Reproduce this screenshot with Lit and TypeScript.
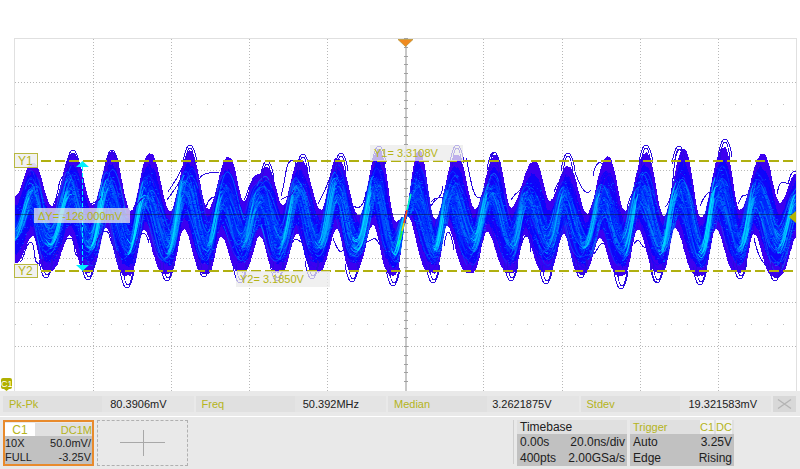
import { LitElement, html, svg, css } from "lit";
import { customElement } from "lit/decorators.js";

type Pt = [number, number];

// Upper and lower edge of the persistence band.
const UPPER: Pt[] = [
  [15, 195], [33, 162], [52, 205], [73, 152], [93, 204], [112, 151], [131, 210], [150, 152], [170, 210],
  [190, 150], [208, 208], [229, 156], [244, 200], [256, 174], [267, 166], [283, 204], [300, 158], [321, 209],
  [337, 157], [359, 215], [379, 149], [396, 221], [404, 216], [419, 149], [435, 218], [457, 153], [475, 208],
  [496, 154], [511, 206], [535, 160], [550, 200], [568, 165], [587, 212], [608, 156], [625, 210], [646, 152],
  [664, 215], [684, 148], [701, 217], [724, 146], [740, 209], [763, 153], [780, 202], [797, 172],
];
// Odd entries are crests, even entries are troughs.
const LOWER: Pt[] = [
  [12, 264], [33, 237], [47, 273], [70, 237], [88, 274], [106, 229], [127, 277], [144, 231], [167, 275],
  [184, 230], [206, 275], [221, 237], [241, 273], [260, 237], [278, 274], [297, 235], [316, 273], [337, 230],
  [353, 272], [373, 226], [393, 277], [407, 217], [433, 274], [447, 227], [470, 274], [487, 233], [511, 274],
  [525, 236], [546, 273], [564, 235], [581, 275], [600, 239], [621, 277], [638, 230], [660, 274], [675, 229],
  [700, 277], [716, 230], [739, 274], [754, 235], [776, 278], [797, 238],
];
const PHASE: Pt[] = LOWER.map(([x], i) => [x - 1, i % 2 ? 0 : 1]);

const at = (pts: Pt[], x: number): number => {
  if (x <= pts[0][0]) return pts[0][1];
  for (let i = 1; i < pts.length; i++) {
    if (x <= pts[i][0]) {
      const [x0, y0] = pts[i - 1];
      const [x1, y1] = pts[i];
      const f = (1 - Math.cos((Math.PI * (x - x0)) / (x1 - x0))) / 2;
      if (pts === PHASE) return y0 + (y1 - y0) * f;
      // The band stays full at its outer extremes and narrows to sharp notches.
      const outer = pts === LOWER ? Math.max(y0, y1) : Math.min(y0, y1);
      const inner = pts === LOWER ? Math.min(y0, y1) : Math.max(y0, y1);
      const g = outer === y0 ? f : 1 - f;
      return outer + (inner - outer) * g ** (pts === LOWER ? 1.8 : 1.2);
    }
  }
  return pts[pts.length - 1][1];
};

let seed = 77;
const rnd = () => {
  seed = (seed * 1664525 + 1013904223) % 4294967296;
  return seed / 4294967296;
};

const band = (inset: number, rough: number) => {
  const top: string[] = [];
  const low: string[] = [];
  for (let x = 15; x <= 796; x++) {
    const u = at(UPPER, x);
    const l = at(LOWER, x);
    const d = (l - u) * inset;
    top.push(`${x},${(u + d + rnd() * rough).toFixed(1)}`);
    low.unshift(`${x},${(l - d - rnd() * rough).toFixed(1)}`);
  }
  return `M${top.join("L")}L${low.join("L")}Z`;
};
const OUTER = band(0, 2);

const strand = (from: number, to: number, mid: number, swing: number, shift: number) => {
  const pts: string[] = [];
  const w = rnd() * 6;
  for (let x = Math.round(from); x <= to; x += 2) {
    const s = x + shift;
    const t = mid + (at(PHASE, s) - 0.5) * swing + 0.05 * Math.sin(x / 15 + w);
    const u = at(UPPER, s);
    const l = at(LOWER, s);
    pts.push(`${x},${(u + (l - u) * t).toFixed(1)}`);
  }
  return `M${pts.join("L")}`;
};

const OUT_TONES = ["#3c00f0", "#2408f8", "#0010ff"];
const IN_TONES = ["#0048ff", "#0068ff", "#0080f8", "#0098f8", "#0020ff", "#0000ff"];
const strands = Array.from({ length: 900 }, () => {
  const from = 15 + Math.floor(rnd() * 775);
  const spread = (rnd() + rnd() - 1) * 0.4;
  const inner = Math.abs(spread) < 0.27;
  const tones = inner ? IN_TONES : OUT_TONES;
  return {
    d: strand(from, Math.min(796, from + 8 + rnd() * 34), 0.52 + spread, rnd() * 0.3, (rnd() - 0.5) * 9),
    c: tones[Math.floor(rnd() * tones.length)],
    o: (0.3 + rnd() * 0.45).toFixed(2),
  };
});

// Rising edges, where most sweeps coincide.
const edges: { d: string; c: string; o: string }[] = [];
for (let i = 0; i < LOWER.length - 1; i += 2) {
  const a = LOWER[i][0];
  const b = LOWER[i + 1][0];
  const strong = 0.4 + 0.6 * Math.abs(Math.cos(((a - 400) * Math.PI) / 300));
  for (let k = 0; k < 12; k++) {
    edges.push({
      d: strand(Math.max(15, a - 2 + rnd() * 7), Math.min(796, b + 3 - rnd() * 7), 0.42 + rnd() * 0.16, 0.1 + rnd() * 0.3, (rnd() - 0.5) * 4),
      c: k % 2 ? "#00f0ff" : "#00b4ff",
      o: (strong * (0.4 + rnd() * 0.45)).toFixed(2),
    });
  }
}

// Dots of single samples give the band its grain.
const grain = (n: number) =>
  Array.from({ length: n }, () => {
    const x = 16 + Math.floor(rnd() * 778);
    const u = at(UPPER, x);
    const l = at(LOWER, x);
    return `M${x},${Math.round(u + (l - u) * (0.2 + rnd() * 0.65)) + 0.5}h${rnd() > 0.6 ? 2 : 1}`;
  }).join("");

const arc = (x: number, y: number, h: number, w = 7) =>
  `M${x - w},${y + h}C${x - w / 2},${y - h / 3} ${x + w / 2},${y - h / 3} ${x + w},${y + h}`;

const STRAYS = [
  ...([[46, 278], [88, 280], [127, 288], [167, 281], [204, 277], [240, 283], [277, 281], [312, 279], [352, 282],
    [393, 286], [433, 283], [511, 281], [546, 284], [581, 278], [621, 289], [657, 283], [700, 285], [740, 279],
    [775, 281]] as Pt[]).flatMap(([x, y]) => [arc(x, y, -18), arc(x + 1, y - 3, -16, 5)]),
  ...([[190, 145], [267, 161], [303, 154], [341, 153], [379, 146], [457, 145], [494, 152], [568, 153], [646, 145],
    [679, 146], [725, 139], [112, 150], [73, 150]] as Pt[]).flatMap(([x, y]) => [arc(x, y, 18), arc(x, y + 3, 18, 5)]),
  "M20,262C24,262 25,242 31,242C36,242 32,263 39,264",
  "M53,205C60,194 57,178 64,176M52,258C60,250 63,238 70,238C77,238 72,256 78,256",
  "M90,205C95,200 98,204 101,196",
  "M96,244C101,228 109,228 110,238C112,246 117,254 121,260",
  "M136,244C141,230 146,230 149,243M133,208C140,204 138,200 143,198",
  "M168,192C174,182 178,178 182,168M167,200C174,190 178,186 181,178",
  "M198,182C200,172 213,172 219,173M206,207C212,190 214,204 217,190",
  "M244,200C250,190 248,180 258,178",
  "M281,196C286,180 285,160 293,160C296,160 296,164 297,168",
  "M281,200C287,194 290,200 294,190M318,204C325,190 328,186 332,170",
  "M293,242C296,234 302,246 306,244M333,238C338,252 341,256 345,246",
  "M354,206C359,210 364,206 366,192",
  "M365,242C370,244 374,232 379,244M378,236C382,252 385,252 388,248",
  "M431,206C436,196 441,201 443,186M466,158C470,172 472,198 479,198C483,198 484,190 488,180",
  "M444,246C447,224 451,230 454,250M431,202C436,196 438,199 443,197",
  "M486,186C491,178 489,154 494,153M511,200C517,190 518,194 526,184",
  "M521,246C525,230 530,234 531,252M554,192C558,180 560,184 563,172",
  "M575,172C582,192 587,196 591,190M593,176C596,160 600,162 603,164",
  "M594,254C599,248 600,240 606,244M627,208C631,190 633,198 636,184",
  "M634,244C641,234 638,246 646,248M648,250C652,266 652,282 657,282",
  "M665,207C673,200 672,182 675,160C677,148 681,148 684,150",
  "M700,206C704,196 709,190 712,193M738,204C744,190 744,198 747,194",
  "M754,238C758,258 765,266 770,268M751,188C753,172 757,176 759,162",
  "M777,194C780,178 784,182 788,184C792,170 792,172 796,171",
];

const X_DIV = [93, 171, 249, 327, 483, 562, 640, 718];
const Y_DIV = [82, 126, 170, 258, 302, 346];

const MEASURES = [
  ["Pk-Pk", "80.3906mV"],
  ["Freq", "50.392MHz"],
  ["Median", "3.2621875V"],
  ["Stdev", "19.321583mV"],
];

@customElement("scope-plot")
class ScopePlot extends LitElement {
  static styles = css`
    :host { display: block; background: #fff; }
    svg { display: block; width: 100%; height: auto; }
    text { font: 12px "Liberation Sans", Arial, sans-serif; fill: #b4b414; }
    .readout { font-size: 11px; }
    .badge { font-size: 9px; fill: #fff; }
    .crisp { shape-rendering: crispEdges; fill: none; }
    .frame { stroke: #e0e0e0; }
    .dots { stroke: #b8b8b8; stroke-dasharray: 1 2; }
    .sparse { stroke: #c0c0c0; stroke-dasharray: 1 15; }
    .axis { stroke: #c8c8c8; stroke-width: 2; }
    .ticks { stroke: #a0a0a0; }
    .center { stroke: #101830; stroke-opacity: 0.5; }
    .cursor { stroke: #b0b010; stroke-width: 2; stroke-dasharray: 10 4; }
    .plate { fill: #ebebeb; fill-opacity: 0.75; }
    .tag { shape-rendering: crispEdges; fill: #f0f0f0; fill-opacity: 0.9; stroke: #b8b840; }
    .stray { stroke: #2a0ae0; }
    .cyan { fill: #00f0ff; }
    .span { stroke: #00f0ff; stroke-dasharray: 4 2; }
  `;
  render() {
    return html`<svg viewBox="0 0 800 391" role="img" aria-label="Persistence waveform, channel 1">
      <clipPath id="band"><path d=${OUTER} /></clipPath>
      <g class="crisp">
        <path class="frame" d="M14.5,391V38.5H796.5V391" />
        ${X_DIV.map((x) => svg`<path class="dots" d="M${x + 0.5},39V391" />`)}
        ${Y_DIV.map((y) => svg`<path class="dots" d="M15,${y + 0.5}H796" />`)}
        <path class="sparse" d="M15,104.5H796M15,324.5H796" />
        <path class="axis" d="M406,46V391" />
        ${Array.from({ length: 40 }, (_, i) => Math.round(38 + i * 8.8)).map(
          (y) => svg`<path class="ticks" d="M404,${y + 0.5}H408" />`)}
      </g>
      <g class="crisp">
        <path fill="#3c00f0" d=${OUTER} />
        <path fill="#1004fa" d=${band(0.12, 5)} />
        <path fill="#0028fc" d=${band(0.28, 9)} />
      </g>
      <g fill="none" clip-path="url(#band)">
        ${strands.map((s) => svg`<path d=${s.d} stroke=${s.c} stroke-opacity=${s.o} />`)}
        <path stroke="#0090ff" stroke-opacity="0.4" d=${grain(2600)} />
        <path stroke="#0000ff" stroke-opacity="0.5" d=${grain(4200)} />
        ${edges.map((s) => svg`<path d=${s.d} stroke=${s.c} stroke-opacity=${s.o} />`)}
      </g>
      <g class="crisp">
        ${STRAYS.map((d) => svg`<path class="stray" d=${d} />`)}
        <path class="center" d="M15,214.5H796" />
        <path class="cursor" d="M41,161H796M41,271H796" />
        <path class="span" d="M82.5,167V265" />
      </g>
      <g fill="none" stroke-width="1.600">
        <path stroke="#00f8c0" d="M407,210L411,194M397,246L400,240" />
        <path stroke="#20f040" d="M400,240L402,231" />
        <path stroke="#e8e000" d="M402,231L404,223" />
        <path stroke="#ff4010" d="M404,223L407,210" />
      </g>
      <path class="cyan" d="M82.5,161L89,167H76ZM82.5,271L89,265H76Z" />
      <rect class="tag" x="14.5" y="153.5" width="23" height="14" />
      <rect class="tag" x="14.5" y="264.5" width="23" height="13" />
      <rect class="plate" x="34" y="208" width="96" height="15" />
      <rect class="plate" x="370" y="145" width="93" height="16" />
      <rect class="plate" x="236" y="271" width="94" height="16" />
      <text x="18" y="165">Y1</text>
      <text x="18" y="275">Y2</text>
      <text class="readout" x="38" y="220">ΔY= -126.000mV</text>
      <text class="readout" x="374" y="157">Y1= 3.3108V</text>
      <text class="readout" x="240" y="283">Y2= 3.1850V</text>
      <path fill="#f08a20" stroke="#b09030" stroke-width="0.7" d="M398,39.500H413L405.500,46.500Z" />
      <path fill="#b4b400" d="M796,211V223L789,217Z" />
      <path fill="#b0b000" d="M3,378H10Q12,378 12,380V387Q12,389 10,389H9L6.500,391L4,389H3Q1,389 1,387V380Q1,378 3,378Z" />
      <text class="badge" x="1" y="387">C1</text>
    </svg>`;
  }
}

@customElement("app-root")
class AppRoot extends LitElement {
  static styles = css`
    :host { display: block; min-height: 100vh; background: #e9e9e9; color: #202020; font: 12px/15px "Liberation Sans", Arial, sans-serif; }
    * { box-sizing: border-box; }
    button { font: inherit; color: inherit; padding: 0; margin: 0; border: 0; background: none; }
    .measures { display: flex; gap: 2px; padding: 5px 4px 4px 3px; border-bottom: 1px solid #fff; font-size: 11px; }
    .list { flex: 1; display: grid; grid-template-columns: repeat(4, 1fr); gap: 2px; margin: 0; }
    .item { display: flex; justify-content: space-between; padding: 0 27px 0 6px; background: linear-gradient(90deg, #e0e0e0 52%, #e4e4e4 52%); line-height: 16px; }
    .item dt { color: #b4b420; }
    .item dd { margin: 0; }
    .item:nth-child(4) { padding-right: 14px; }
    .close { width: 23px; height: 16px; background: #d8d8d8; display: grid; place-items: center; }
    .dock { display: flex; padding: 3px; }
    .card { display: block; text-align: left; }
    .row { display: flex; justify-content: space-between; }
    .body { background: #c1c1c1; padding: 0 2px 0 3px; }
    .body .row { line-height: 16px; }
    .head { background: #e0e0e0; line-height: 14px; }
    .channel { width: 91px; border: 2px solid #e88a2c; }
    .channel .body { padding: 0 1px 0 0; font-size: 11px; }
    .channel .head { color: #b4b420; height: 13px; }
    .channel .name { width: 30px; background: #fff; text-align: center; }
    .channel .body .row { line-height: 14px; }
    .small { font-size: 11px; }
    .add { width: 91px; margin-left: 3px; border: 1px dashed #b0b0b0; display: grid; place-items: center; }
    .rule { width: 1px; height: 44px; background: #cfcfcf; margin-left: auto; }
    .time { width: 110px; margin-left: 3px; }
    .time .head { padding-left: 3px; }
    .trigger { width: 104px; margin: 0 63px 0 3px; }
    .trigger .head { color: #b4b420; padding: 0 2px 0 3px; font-size: 11px; }
    .chips { display: flex; gap: 2px; }
    .chips span { background: #f2f2f2; }
  `;
  render() {
    return html`
      <scope-plot></scope-plot>
      <section class="measures">
        <dl class="list">
          ${MEASURES.map(([k, v]) => html`<div class="item"><dt>${k}</dt><dd>${v}</dd></div>`)}
        </dl>
        <button class="close" aria-label="Close measurements">
          <svg width="15" height="10" viewBox="0 0 15 10" fill="none" stroke="#b4b4b4" stroke-width="1.300"><path d="M1,0.500L14,9.500M14,0.500L1,9.500" /></svg>
        </button>
      </section>
      <footer class="dock">
        <button class="card channel">
          <div class="head row"><span class="name">C1</span><span class="small">DC1M</span></div>
          <div class="body">
            <div class="row"><span>10X</span><span>50.0mV/</span></div>
            <div class="row"><span>FULL</span><span>-3.25V</span></div>
          </div>
        </button>
        <button class="add" aria-label="Add channel">
          <svg width="46" height="26" viewBox="0 0 46 26" stroke="#a8a8a8"><path d="M0,12.500H45M23.500,0V26" /></svg>
        </button>
        <div class="rule"></div>
        <button class="card time">
          <div class="head">Timebase</div>
          <div class="body">
            <div class="row"><span>0.00s</span><span>20.0ns/div</span></div>
            <div class="row"><span>400pts</span><span>2.00GSa/s</span></div>
          </div>
        </button>
        <button class="card trigger">
          <div class="head row"><span>Trigger</span><span class="chips"><span>C1</span><span>DC</span></span></div>
          <div class="body">
            <div class="row"><span>Auto</span><span>3.25V</span></div>
            <div class="row"><span>Edge</span><span>Rising</span></div>
          </div>
        </button>
      </footer>
    `;
  }
}
